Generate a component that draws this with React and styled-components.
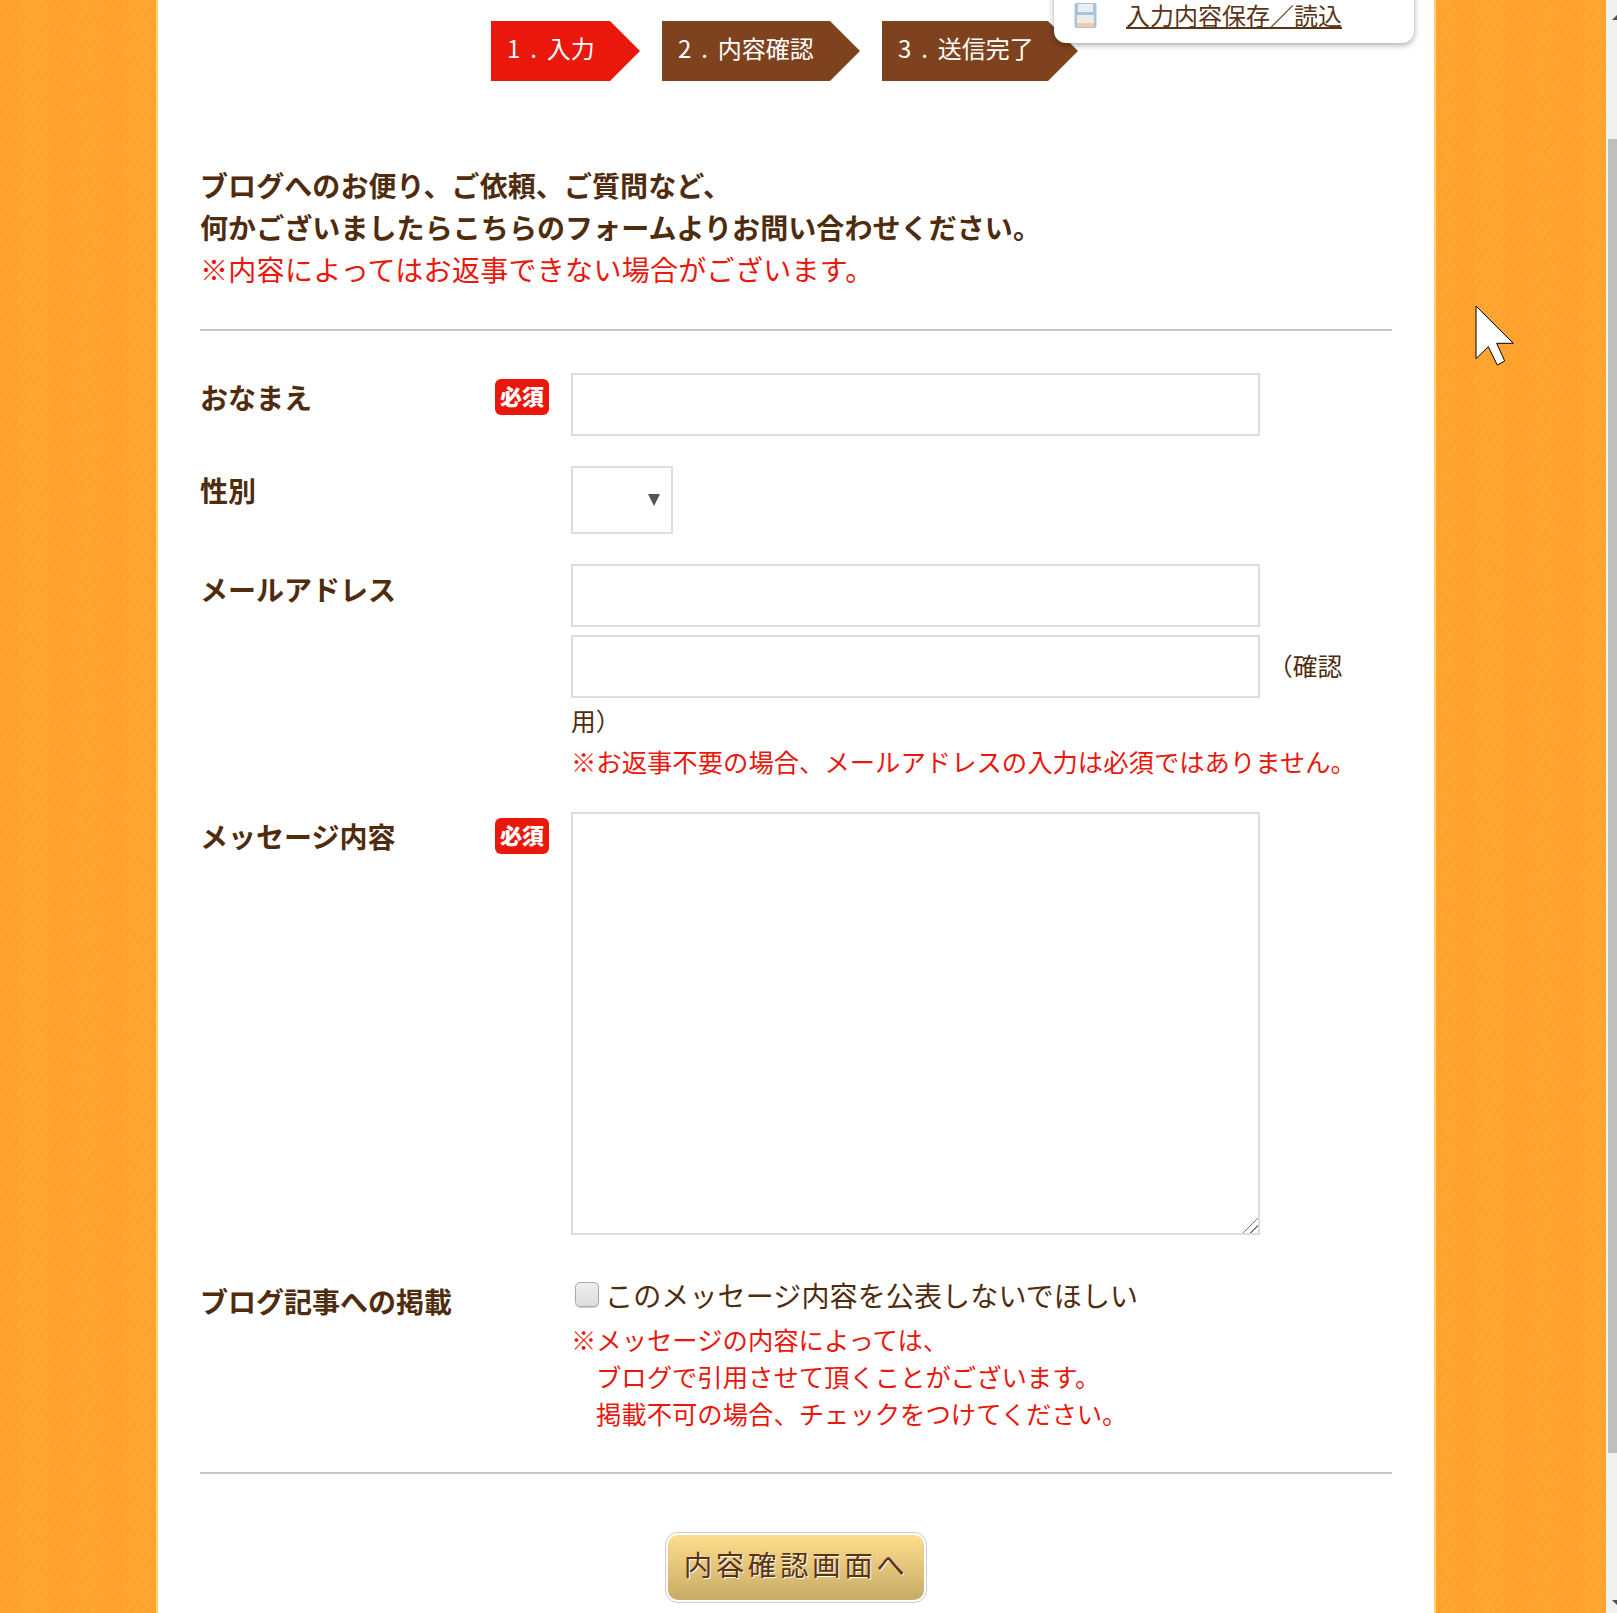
import React from "react";
import styled, { createGlobalStyle } from "styled-components";

const Global = createGlobalStyle`
  html, body { margin: 0; padding: 0; height: 100%; overflow: hidden; }
  body { font-family: "Noto Sans CJK JP", "Noto Sans", sans-serif; color: #4f2c0d; }
  * { box-sizing: border-box; }
`;

const Screen = styled.div`
  display: flex;
  height: 1613px;
  overflow: hidden;
  position: relative;
`;
const Backdrop = styled.main`
  flex: 1;
  padding-left: 156px;
  background-color: #ffa22c;
  background-image:
    repeating-linear-gradient(-55deg, rgba(255,255,255,.03) 0 3px, rgba(0,0,0,0) 3px 7px),
    repeating-linear-gradient(-35deg, rgba(240,130,10,.03) 0 2px, rgba(0,0,0,0) 2px 9px),
    repeating-linear-gradient(90deg, rgba(240,130,10,.05) 0 18px, rgba(255,180,70,.04) 18px 50px, rgba(240,130,10,.03) 50px 72px, rgba(255,180,70,.02) 72px 104px);
`;
const Sheet = styled.div`
  width: 1280px;
  height: 100%;
  background: #fff;
  border-left: 2px solid #ffd277;
  border-right: 2px solid #ffd277;
  padding: 0 42px;
  position: relative;
`;
const Steps = styled.ol`
  display: flex;
  gap: 22px;
  list-style: none;
  margin: 0 0 0 291px;
  padding: 21px 0 0;
`;
const Step = styled.li`
  height: 60px;
  width: ${(p) => p.$w}px;
  padding-left: 16px;
  font-size: 24px;
  line-height: 53px;
  word-spacing: 4.5px;
  color: #fff;
  background: ${(p) => (p.$active ? "#e9170c" : "#7f421e")};
  clip-path: polygon(0 0, calc(100% - 30px) 0, 100% 50%, calc(100% - 30px) 100%, 0 100%);
`;
const SavePanel = styled.div`
  position: absolute;
  left: 896px;
  top: -10px;
  width: 360px;
  height: 53px;
  padding: 10px 0 0 20px;
  display: flex;
  align-items: flex-start;
  gap: 29px;
  background: #fff;
  border-radius: 0 0 12px 12px;
  box-shadow: 0 2px 6px rgba(0,0,0,.35);
`;
const SaveLink = styled.a`
  font-size: 24px;
  line-height: 29px;
  color: #5a3416;
  text-decoration: underline;
`;
const Intro = styled.div`
  margin-top: 83px;
  font-size: 28px;
  line-height: 42px;
`;
const Lead = styled.p`
  margin: 0;
  font-weight: 700;
  letter-spacing: .08px;
`;
const Warning = styled.p`
  margin: 0;
  color: #e9170c;
  letter-spacing: .3px;
`;
const Rule = styled.hr`
  border: 0;
  height: 2px;
  background: #c8c8c8;
  margin: ${(p) => p.$top}px 0 ${(p) => p.$bottom}px;
`;
const Row = styled.div`
  display: flex;
  gap: 22px;
  margin-bottom: ${(p) => p.$after || 30}px;
`;
const LabelCell = styled.div`
  width: 349px;
  flex: none;
  display: flex;
  justify-content: space-between;
  align-items: flex-start;
  padding-top: ${(p) => p.$top || 3}px;
`;
const Label = styled.label`
  font-size: 28px;
  line-height: 42px;
  font-weight: 700;
`;
const Required = styled.span`
  width: 54px;
  height: 36px;
  margin-top: 3px;
  border-radius: 6px;
  background: #e9170c;
  color: #fff;
  font-size: 22px;
  font-weight: 900;
  line-height: 32px;
  text-align: center;
`;
const Field = styled.div`
  flex: 1;
  min-width: 0;
  font-size: 24.75px;
  line-height: 37px;
`;
const TextInput = styled.input`
  display: block;
  width: 689px;
  height: 63px;
  border: 2px solid #ddd;
  background: #fff;
  margin-bottom: ${(p) => p.$gap || 0}px;
`;
const ConfirmInput = styled(TextInput)`
  display: inline-block;
  vertical-align: middle;
  margin: 0 8px 0 0;
`;
const ConfirmHead = styled.span`
  vertical-align: -3px;
`;
const ConfirmTail = styled.div`
  margin-top: 4px;
  padding-bottom: 4px;
`;
const SelectWrap = styled.div`
  position: relative;
  width: 102px;
  height: 68px;
  &::after {
    content: "";
    position: absolute;
    left: 77px;
    top: 28px;
    width: 12px;
    height: 12px;
    background: #555;
    clip-path: polygon(0 0, 100% 0, 50% 100%);
  }
`;
const Select = styled.select`
  appearance: none;
  width: 100%;
  height: 100%;
  border: 2px solid #ddd;
  background: #fff;
  border-radius: 0;
`;
const Note = styled.div`
  color: #e9170c;
  font-size: 25.35px;
  margin-top: ${(p) => p.$top || 0}px;
`;
const NoteIndent = styled.div`
  padding-left: 25px;
`;
const TextArea = styled.textarea`
  display: block;
  width: 689px;
  height: 423px;
  border: 2px solid #ddd;
  background: #fff;
  &::-webkit-scrollbar {
    width: 16px;
    height: 16px;
  }
  &::-webkit-resizer {
    background: linear-gradient(135deg, transparent 0 48%, #777 48% 53%, transparent 53% 72%, #777 72% 77%, transparent 77%);
  }
`;
const CheckLine = styled.label`
  display: flex;
  align-items: center;
  gap: 6px;
  padding-left: 4px;
  font-size: 28px;
  letter-spacing: .14px;
  line-height: 42px;
  margin-top: 9px;
`;
const Check = styled.input`
  appearance: none;
  margin: 0 0 2px;
  width: 24px;
  height: 25px;
  border-radius: 5px;
  border: 1px solid #aaa;
  background: linear-gradient(#eee, #ddd);
  box-shadow: 0 1px 1px rgba(0,0,0,.2);
`;
const Actions = styled.div`
  display: flex;
  justify-content: center;
`;
const SubmitButton = styled.button`
  width: 260px;
  height: 69px;
  padding: 0 0 8px;
  border-radius: 12px;
  border: 2px solid #fff;
  outline: 1px solid #c9c9c9;
  background: linear-gradient(#fedd8d, #c7ab65);
  color: #5a3410;
  font-family: inherit;
  font-size: 28.5px;
  letter-spacing: 3.6px;
  text-shadow: 1px 1px 1px #fff;
`;
const Cursor = styled.svg`
  position: absolute;
  left: 1475px;
  top: 305px;
`;
const Track = styled.div`
  width: 11px;
  flex: none;
  background: #f1f1f1;
  position: relative;
  overflow: hidden;
`;
const Thumb = styled.div`
  position: absolute;
  left: 2px;
  right: 0;
  top: 139px;
  height: 1314px;
  background: #bfbfbf;
`;
const ScrollArrow = styled.span`
  position: absolute;
  left: 6px;
  ${(p) => (p.$down ? "bottom: 8px;" : "top: 15px;")}
  border-left: 5px solid transparent;
  border-right: 5px solid transparent;
  ${(p) => (p.$down ? "border-top: 5px solid #505050;" : "border-bottom: 5px solid #505050;")}
`;
const FloppyIcon = styled.svg`
  flex: none;
  margin-top: 3px;
  filter: blur(.4px);
`;

const Floppy = () => (
  <FloppyIcon width="23" height="25" viewBox="0 0 23 25">
    <rect x="0.5" y="0" width="22" height="25" rx="2" fill="#a7c6da" />
    <rect x="4" y="1" width="15" height="8" fill="#e9eef2" />
    <rect x="3" y="12" width="17" height="12" fill="#ecebe8" />
    <rect x="3" y="20" width="17" height="4" fill="#f3c9a8" />
  </FloppyIcon>
);

const App = () => (
  <Screen>
    <Global />
    <Backdrop>
      <Sheet>
        <Steps>
          <Step $active $w={149}>1 . 入力</Step>
          <Step $w={198}>2 . 内容確認</Step>
          <Step $w={196}>3 . 送信完了</Step>
        </Steps>
        <SavePanel>
          <Floppy />
          <SaveLink href="#">入力内容保存／読込</SaveLink>
        </SavePanel>
        <Intro>
          <Lead>ブログへのお便り、ご依頼、ご質問など、</Lead>
          <Lead>何かございましたらこちらのフォームよりお問い合わせください。</Lead>
          <Warning>※内容によってはお返事できない場合がございます。</Warning>
        </Intro>
        <Rule $top={39} $bottom={42} />
        <Row>
          <LabelCell>
            <Label>おなまえ</Label>
            <Required>必須</Required>
          </LabelCell>
          <Field>
            <TextInput />
          </Field>
        </Row>
        <Row>
          <LabelCell $top={3}>
            <Label>性別</Label>
          </LabelCell>
          <Field>
            <SelectWrap>
              <Select />
            </SelectWrap>
          </Field>
        </Row>
        <Row $after={32}>
          <LabelCell $top={4}>
            <Label>メールアドレス</Label>
          </LabelCell>
          <Field>
            <TextInput $gap={8} />
            <div>
              <ConfirmInput />
              <ConfirmHead>（確認</ConfirmHead>
            </div>
            <ConfirmTail>用）</ConfirmTail>
            <Note>※お返事不要の場合、メールアドレスの入力は必須ではありません。</Note>
          </Field>
        </Row>
        <Row>
          <LabelCell>
            <Label>メッセージ内容</Label>
            <Required>必須</Required>
          </LabelCell>
          <Field>
            <TextArea />
          </Field>
        </Row>
        <Row>
          <LabelCell $top={15}>
            <Label>ブログ記事への掲載</Label>
          </LabelCell>
          <Field>
            <CheckLine>
              <Check type="checkbox" />
              このメッセージ内容を公表しないでほしい
            </CheckLine>
            <Note $top={5}>
              ※メッセージの内容によっては、
              <NoteIndent>ブログで引用させて頂くことがございます。</NoteIndent>
              <NoteIndent>掲載不可の場合、チェックをつけてください。</NoteIndent>
            </Note>
          </Field>
        </Row>
        <Rule $top={40} $bottom={59} />
        <Actions>
          <SubmitButton type="button">内容確認画面へ</SubmitButton>
        </Actions>
      </Sheet>
    </Backdrop>
    <Track>
      <ScrollArrow />
      <Thumb />
      <ScrollArrow $down />
    </Track>
    <Cursor width="39" height="61" viewBox="-1 -1 39 61">
      <polygon
        points="0,0 0,52.7 12.3,40.7 21.3,59 28.7,55 20.7,37.3 37.3,37.3"
        fill="#fff"
        stroke="#000"
        strokeWidth="1"
      />
    </Cursor>
  </Screen>
);

export default App;
